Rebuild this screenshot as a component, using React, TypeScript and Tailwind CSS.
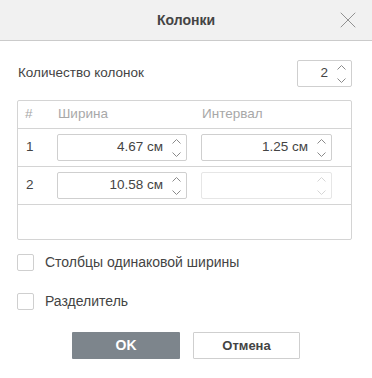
import { X } from 'lucide-react';

const Chevrons = ({ disabled = false }: { disabled?: boolean }) => (
  <div
    className={`flex flex-col items-center gap-[8px] ${disabled ? 'text-[#d6d6d6]' : 'text-[#8a8a8a]'}`}
  >
    <svg width="9" height="5" viewBox="0 0 9 5" fill="none">
      <path d="M0.5 4.5 L4.5 0.5 L8.5 4.5" stroke="currentColor" strokeWidth="1" />
    </svg>
    <svg width="9" height="5" viewBox="0 0 9 5" fill="none">
      <path d="M0.5 0.5 L4.5 4.5 L8.5 0.5" stroke="currentColor" strokeWidth="1" />
    </svg>
  </div>
);

type SpinProps = {
  value?: string;
  disabled?: boolean;
  className?: string;
};

const SpinInput = ({ value = '', disabled = false, className = '' }: SpinProps) => (
  <div
    className={`flex h-[27px] items-center justify-end rounded-[2px] border pr-[5px] ${
      disabled ? 'border-[#e6e6e6]' : 'border-[#cfcfcf]'
    } ${className}`}
  >
    <span className="mr-[9px] text-[13.5px] text-[#444]">{value}</span>
    <Chevrons disabled={disabled} />
  </div>
);

const Checkbox = ({ label }: { label: string }) => (
  <label className="flex h-[17px] items-center gap-[11px]">
    <span className="h-[17px] w-[17px] rounded-[2px] border border-[#cfcfcf] bg-white" />
    <span className="text-[14px] text-[#444]">{label}</span>
  </label>
);

const rows = [
  { n: '1', width: '4.67 см', gap: '1.25 см' },
  { n: '2', width: '10.58 см', gap: '' },
];

export default function App() {
  return (
    <div className="h-[378px] w-[372px] bg-white font-['Liberation_Sans',Arial,sans-serif] text-[#444]">
      <div className="relative flex h-[41px] items-center justify-center border-b border-[#cbcbcb] bg-[#f1f1f1]">
        <span className="text-[14px] font-bold text-[#444]">Колонки</span>
        <X
          size={28}
          strokeWidth={0.8}
          className="absolute right-[10px] top-[6px] text-[#8a8a8a]"
        />
      </div>

      <div className="pl-[17px] pr-[20px]">
        <div className="mt-[19px] flex h-[27px] items-center justify-between">
          <span className="pl-[1px] text-[13.5px]">Количество колонок</span>
          <SpinInput value="2" className="w-[55px]" />
        </div>

        <div className="mt-[13px] h-[140px] rounded-[2px] border border-[#d4d4d4]">
          <div className="flex h-[28px] items-center border-b border-[#d4d4d4] text-[13.5px] text-[#a8a8a8]">
            <span className="w-[39px] pl-[7px]">#</span>
            <span className="w-[130px] pl-[1px]">Ширина</span>
            <span className="ml-[14px] pl-[1px]">Интервал</span>
          </div>
          {rows.map((r) => (
            <div
              key={r.n}
              className="flex h-[38px] items-center border-b border-[#d4d4d4] text-[13.5px]"
            >
              <span className="w-[39px] pl-[8px]">{r.n}</span>
              <SpinInput value={r.width} className="w-[130px]" />
              <SpinInput value={r.gap} disabled={!r.gap} className="ml-[14px] w-[131px]" />
            </div>
          ))}
        </div>

        <div className="mt-[14px] flex flex-col gap-[22px]">
          <Checkbox label="Столбцы одинаковой ширины" />
          <Checkbox label="Разделитель" />
        </div>

        <div className="mt-[22px] flex justify-center gap-[13px] pl-[3px]">
          <button className="h-[27px] w-[108px] rounded-[1px] bg-[#7d858c] text-[14px] font-bold text-white">
            OK
          </button>
          <button className="h-[27px] w-[107px] rounded-[1px] border border-[#cfcfcf] bg-white text-[13px] font-bold text-[#444]">
            Отмена
          </button>
        </div>
      </div>
    </div>
  );
}
